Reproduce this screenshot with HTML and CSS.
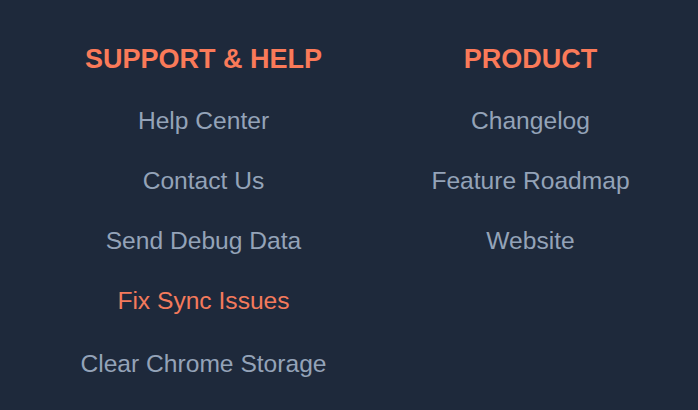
FILE: index.html
```html
<!DOCTYPE html>
<html>
<head>
<meta charset="utf-8">
<link rel="stylesheet" href="styles.css">
</head>
<body>
<div class="footer">
  <div class="col">
    <h2 class="heading">SUPPORT &amp; HELP</h2>
    <ul class="links">
      <li><a class="link">Help Center</a></li>
      <li><a class="link">Contact Us</a></li>
      <li><a class="link">Send Debug Data</a></li>
      <li><a class="link link-accent">Fix Sync Issues</a></li>
      <li class="last"><a class="link">Clear Chrome Storage</a></li>
    </ul>
  </div>
  <div class="col">
    <h2 class="heading">PRODUCT</h2>
    <ul class="links">
      <li><a class="link">Changelog</a></li>
      <li><a class="link">Feature Roadmap</a></li>
      <li><a class="link">Website</a></li>
    </ul>
  </div>
</div>
</body>
</html>
```
FILE: styles.css
```css
html, body {
  margin: 0;
  padding: 0;
  background: #1e293b;
  height: 100%;
}
body {
  font-family: "Liberation Sans", Arial, sans-serif;
}
.footer {
  display: grid;
  grid-template-columns: 327px 327px;
  padding: 41px 0 0 40px;
}
.col {
  display: flex;
  flex-direction: column;
  align-items: center;
  text-align: center;
}
.heading {
  margin: 0;
  font-size: 27px;
  line-height: 36px;
  font-weight: 700;
  color: #fa7a59;
}
.links {
  list-style: none;
  margin: 30px 0 0;
  padding: 0;
  display: flex;
  flex-direction: column;
  gap: 32px;
}
.links li {
  font-size: 24.6px;
  line-height: 28px;
}
.links li.last {
  margin-top: 3px;
}
.link {
  color: #94a3b8;
  cursor: pointer;
}
.link-accent {
  color: #f47a5c;
}
```
